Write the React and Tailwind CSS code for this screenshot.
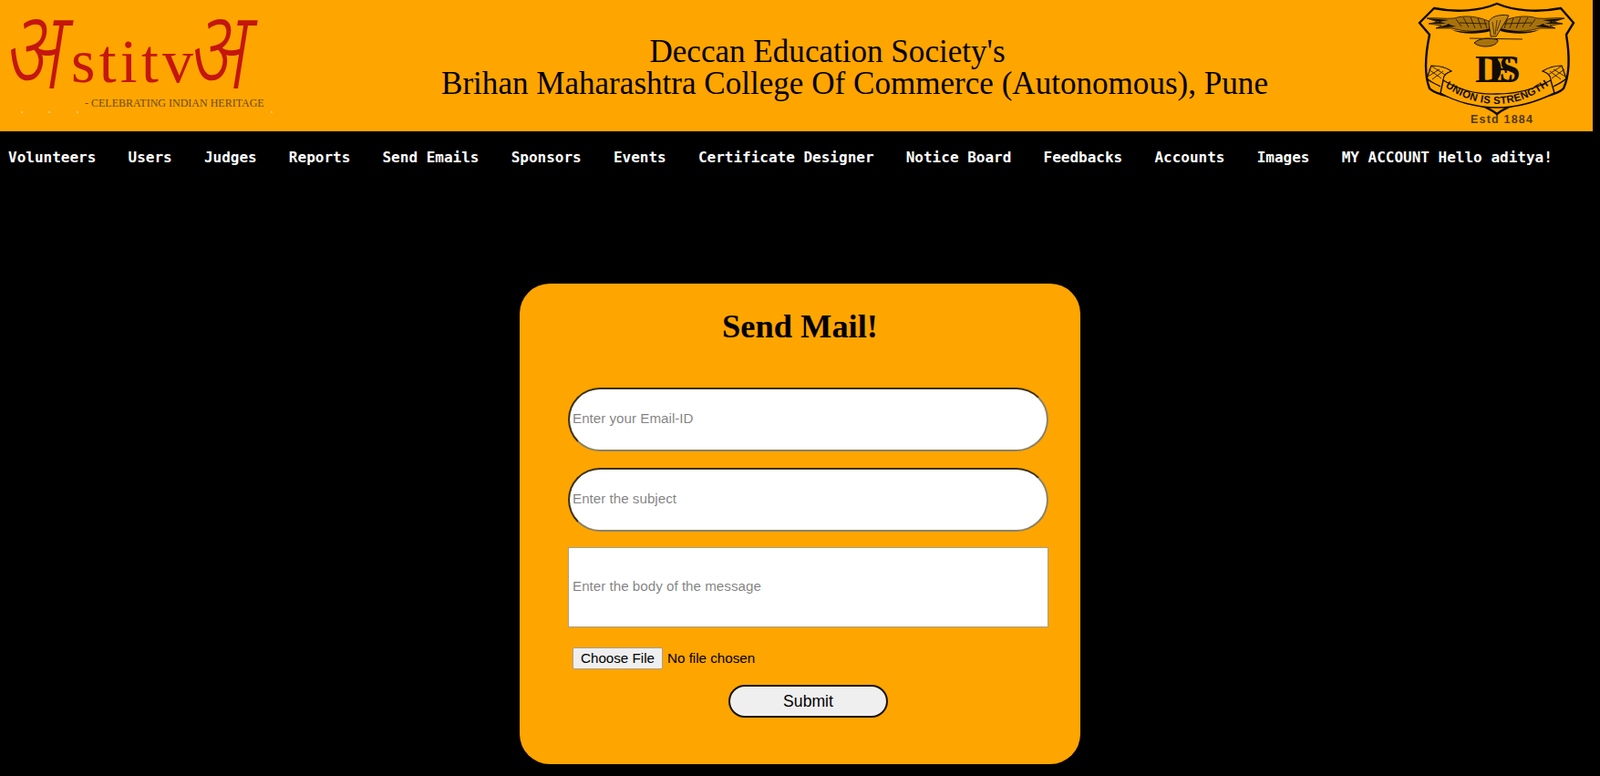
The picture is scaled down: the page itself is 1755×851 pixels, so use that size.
const NAV = ["Volunteers", "Users", "Judges", "Reports", "Send Emails", "Sponsors", "Events", "Certificate Designer", "Notice Board", "Feedbacks", "Accounts", "Images", "MY ACCOUNT Hello aditya!"];

function AastitvaLogo() {
  return (
    <svg width="320" height="144" viewBox="0 0 320 144" className="shrink-0">
      <g fill="#c4160d" fontWeight="300" fontFamily="'Noto Sans','Liberation Serif',serif">
        <text transform="translate(3 97) skewX(-9) scale(1.25 1.67)" fontSize="72">अ</text>
        <text transform="translate(205 97) skewX(-9) scale(1.25 1.67)" fontSize="72">अ</text>
      </g>
      <text x="78" y="90" fontSize="68" fill="#c4160d" fontFamily="'Liberation Serif',serif" textLength="134" lengthAdjust="spacing">stitv</text>
      <text x="93" y="117" fontSize="12" fill="#6b4a10" fontFamily="'Liberation Serif',serif">- CELEBRATING INDIAN HERITAGE</text>
      <g fill="#ffd27a">
        <circle cx="24" cy="123" r="1" />
        <circle cx="54" cy="123" r="1" />
        <circle cx="85" cy="123" r="1" />
        <circle cx="298" cy="123" r="1" />
      </g>
    </svg>
  );
}

function EagleWing() {
  return (
    <g>
      <path d="M82 25 C68 18 52 16 40 20 C30 21 20 19 10 20 L22 24 L12 26 L26 28 L20 31 L38 31 C50 35 68 35 82 33 Z" fill="#a8720a" stroke="#1a1204" strokeWidth="0.8" />
      <path d="M10 20 L34 22 L14 26 L36 26 L20 31 L42 29 Z" fill="#120c02" />
      <path d="M36 32 C48 36 66 35 80 31 L80 34 C66 38 48 38 36 32 Z" fill="#120c02" />
      <path d="M42 21 L48 29 M50 19 L56 30 M58 19 L63 31 M66 20 L70 31 M73 22 L76 31 M46 25 L76 26" stroke="#1a1204" strokeWidth="0.8" fill="none" />
    </g>
  );
}

function Crest() {
  return (
    <svg width="180" height="144" viewBox="0 0 180 144" className="shrink-0">
      {/* shield */}
      <path d="M2 25 L18 9 C42 14 68 12 87 4 C106 12 132 14 157 9 L171 25 L163 38 C167 62 166 84 160 97 C150 108 108 108 87 125 C66 108 24 108 13 97 C8 84 8 62 13 38 Z" fill="none" stroke="#0d0902" strokeWidth="2.4" />
      {/* eagle */}
      <EagleWing />
      <g transform="translate(171 0) scale(-1 1)">
        <EagleWing />
      </g>
      <path d="M78 24 C80 19 88 15 100 17 L96 24 C92 30 90 34 86 40 L80 40 C80 34 78 30 78 24 Z" fill="#c98a10" stroke="#1a1204" strokeWidth="0.9" />
      <path d="M82 24 L84 38 M87 22 L85 38 M91 22 L87 34" stroke="#1a1204" strokeWidth="0.7" />
      <path d="M62 47 C68 41 82 41 88 44 C88 51 70 54 62 47 Z" fill="#a8720a" stroke="#1a1204" strokeWidth="1" />
      <path d="M57 42 L115 43" stroke="#2a1d06" strokeWidth="1" />
      {/* monogram */}
      <text x="63" y="90" fontSize="42" fontWeight="bold" fill="#120c02" fontFamily="'Liberation Serif',serif" letterSpacing="-16">DES</text>
      {/* ribbon */}
      <path d="M28 88 C48 100 68 104 87 103 C108 103 128 98 146 88 L150 102 C130 112 108 118 87 118 C66 118 42 112 25 102 Z" fill="#ffa500" stroke="#0d0902" strokeWidth="1.4" />
      <path d="M28 88 C28 82 32 80 37 78 C30 73 22 72 15 72 L10 86 C14 90 20 92 25 95" fill="none" stroke="#0d0902" strokeWidth="1.2" />
      <path d="M146 88 C146 82 142 80 137 78 C145 73 152 72 158 72 L163 86 C159 90 154 92 149 95" fill="none" stroke="#0d0902" strokeWidth="1.2" />
      <path d="M12 76 L26 86 M16 73 L30 82 M11 84 L24 76 M16 87 L28 78" stroke="#3a2906" strokeWidth="1" />
      <path d="M161 76 L147 86 M157 73 L143 82 M162 84 L149 76 M157 87 L145 78" stroke="#3a2906" strokeWidth="1" />
      <path id="crest-motto" d="M24 91 C46 108 68 114 87 114 C108 114 128 106 150 89" fill="none" />
      <text fontSize="11.5" fontWeight="bold" fill="#120c02" fontFamily="'Liberation Sans',sans-serif" letterSpacing="0.3">
        <textPath href="#crest-motto" startOffset="50%" textAnchor="middle">UNION IS STRENGTH</textPath>
      </text>
      <text x="58" y="135" fontSize="12.5" fontWeight="bold" fill="#4d3a0c" fontFamily="'Liberation Sans',sans-serif" letterSpacing="1.2">Estd 1884</text>
    </svg>
  );
}

export default function App() {
  return (
    <div className="h-[851px] overflow-hidden bg-black font-['Liberation_Sans',sans-serif] text-black">
      <header className="flex h-[144px] w-[1747px] items-center bg-[#ffa500]">
        <AastitvaLogo />
        <div className="flex-1 pt-[3px] text-center font-['Liberation_Serif',serif] text-[35.1px] leading-[35px]">
          <div className="pr-[60px]">Deccan Education Society's</div>
          <div>Brihan Maharashtra College Of Commerce (Autonomous), Pune</div>
        </div>
        <Crest />
        <div className="w-[12px]" />
      </header>
      <nav className="flex h-[56px] items-center gap-[35.2px] pt-[2px] pl-[9px] font-['DejaVu_Sans_Mono',monospace] text-[16px] font-bold text-white">
        {NAV.map((item) => (
          <span key={item} className="whitespace-nowrap">{item}</span>
        ))}
      </nav>
      <main className="flex justify-center pt-[111px]">
        <form className="h-[527px] w-[615px] rounded-[33px] bg-[#ffa500] pl-[53px] pr-[35px]">
          <h1 className="-ml-[18px] pt-[27px] pb-[47px] text-center font-['Liberation_Serif',serif] text-[36.4px] font-bold leading-[40px]">Send Mail!</h1>
          <input placeholder="Enter your Email-ID" className="mb-[18px] block h-[70px] w-[527px] rounded-[35px] border-2 border-t-[#3a3014] border-r-[#8a8268] border-b-[#8a8268] border-l-[#3a3014] bg-white px-[3px] pb-[3px] text-[15.2px]" />
          <input placeholder="Enter the subject" className="mb-[17px] block h-[70px] w-[527px] rounded-[35px] border-2 border-t-[#3a3014] border-r-[#8a8268] border-b-[#8a8268] border-l-[#3a3014] bg-white px-[3px] pb-[3px] text-[15.2px]" />
          <textarea placeholder="Enter the body of the message" className="mb-[22px] block h-[88px] w-[527px] resize-none border border-[#a89f8c] bg-white px-[4px] pt-[31px] text-[15.2px]" />
          <input type="file" className="ml-[5px] block text-[15.2px] file:mr-[5px] file:h-[24px] file:w-[99px] file:rounded-[2px] file:border file:border-[#a89f8c] file:bg-[#efefef] file:text-[15.2px]" />
          <div className="flex justify-center pt-[17px]">
            <button type="button" className="h-[36px] w-[175px] rounded-[18px] border-2 border-[#1a1204] bg-[#efefef] text-[17.6px]">Submit</button>
          </div>
        </form>
      </main>
    </div>
  );
}
